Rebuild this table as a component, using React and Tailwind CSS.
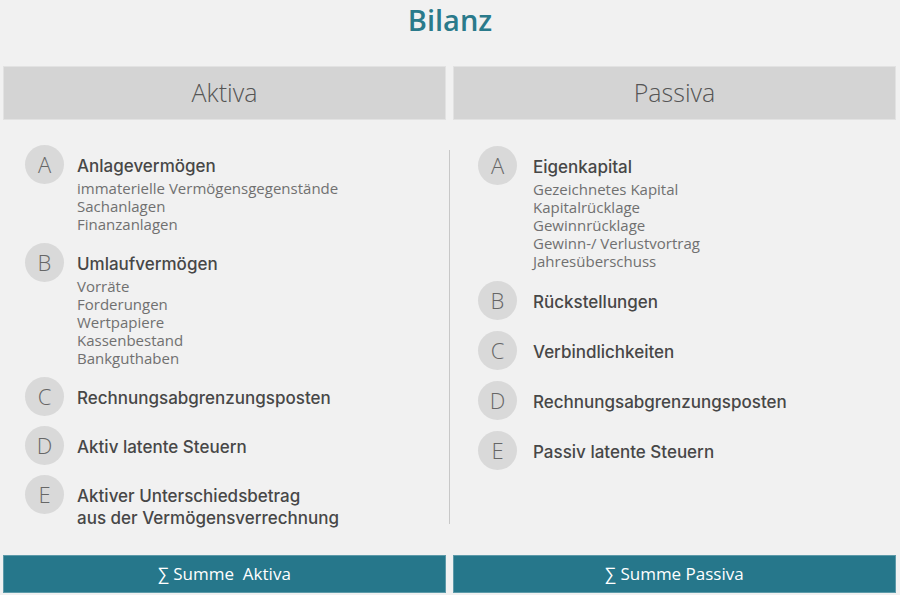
const aktiva = [
  { letter: "A", title: "Anlagevermögen", subs: ["immaterielle Vermögensgegenstände", "Sachanlagen", "Finanzanlagen"] },
  { letter: "B", title: "Umlaufvermögen", subs: ["Vorräte", "Forderungen", "Wertpapiere", "Kassenbestand", "Bankguthaben"] },
  { letter: "C", title: "Rechnungsabgrenzungsposten" },
  { letter: "D", title: "Aktiv latente Steuern" },
  { letter: "E", title: ["Aktiver Unterschiedsbetrag", "aus der Vermögensverrechnung"] },
];

const passiva = [
  { letter: "A", title: "Eigenkapital", subs: ["Gezeichnetes Kapital", "Kapitalrücklage", "Gewinnrücklage", "Gewinn-/ Verlustvortrag", "Jahresüberschuss"] },
  { letter: "B", title: "Rückstellungen" },
  { letter: "C", title: "Verbindlichkeiten" },
  { letter: "D", title: "Rechnungsabgrenzungsposten" },
  { letter: "E", title: "Passiv latente Steuern" },
];

function Item({ letter, title, subs, gap }) {
  const lines = Array.isArray(title) ? title : [title];
  return (
    <div className={`flex items-start ${gap}`}>
      <div className="w-[39px] h-[39px] shrink-0 rounded-full bg-[#d9d9d9] flex items-center justify-center text-[22px] font-light text-[#666]">
        {letter}
      </div>
      <div className="pt-[10px]">
        {lines.map((l) => (
          <div key={l} className="font-['Inter',sans-serif] text-[17px] leading-[22px] font-medium text-[#474747]">
            {l}
          </div>
        ))}
        {subs && (
          <div className="mt-[2px]">
            {subs.map((s) => (
              <div key={s} className="text-[15px] leading-[18px] text-[#707070]">
                {s}
              </div>
            ))}
          </div>
        )}
      </div>
    </div>
  );
}

export default function App() {
  return (
    <div className="w-[900px] h-[595px] bg-[#f1f1f1] flex flex-col font-['Open_Sans',sans-serif]">
      {/* Title */}
      <h1 className="h-[40px] leading-[40px] text-center text-[29px] font-semibold text-[#2a7a8b]">
        Bilanz
      </h1>

      {/* Headers */}
      <div className="mt-[26px] px-[3px] flex gap-[7px]">
        <div className="w-[443px] h-[54px] bg-[#d4d4d4] border border-[#e2e2e2] flex items-center justify-center text-[25px] font-light text-[#555]">
          Aktiva
        </div>
        <div className="w-[443px] h-[54px] bg-[#d4d4d4] border border-[#e2e2e2] flex items-center justify-center text-[25px] font-light text-[#555]">
          Passiva
        </div>
      </div>

      {/* Content */}
      <div className="flex-1 px-[3px] flex">
        <div className="w-[443px] pl-[22px] pt-[25px] flex flex-col gap-[10px]">
          {aktiva.map((it) => (
            <Item key={it.letter} {...it} gap="gap-[13px]" />
          ))}
        </div>
        <div className="w-[7px] flex justify-center pt-[30px] pb-[31px]">
          <div className="w-px bg-[#c8c8c8]" />
        </div>
        <div className="w-[443px] pl-[25px] pt-[26px] flex flex-col gap-[11px]">
          {passiva.map((it) => (
            <Item key={it.letter} {...it} gap="gap-[16px]" />
          ))}
        </div>
      </div>

      {/* Totals */}
      <div className="px-[3px] pb-[2px] flex gap-[7px]">
        <div className="w-[443px] h-[38px] bg-[#26778b] border border-[#5d9aa9] flex items-center justify-center text-[17px] text-white">
          ∑ Summe&nbsp;&nbsp;Aktiva
        </div>
        <div className="w-[443px] h-[38px] bg-[#26778b] border border-[#5d9aa9] flex items-center justify-center text-[17px] text-white">
          ∑ Summe Passiva
        </div>
      </div>
    </div>
  );
}
